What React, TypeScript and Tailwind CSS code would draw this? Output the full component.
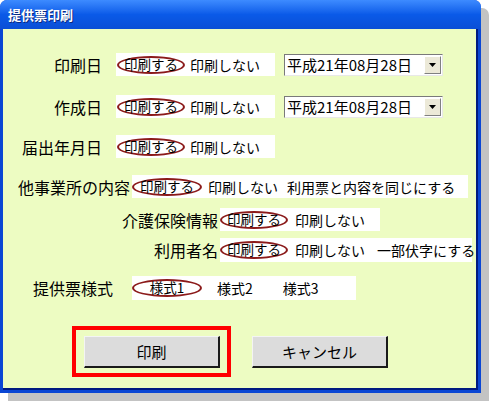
import React from 'react';

const Oval = ({ w, children }: { w: number; children: React.ReactNode }) => (
  <span
    className="shrink-0 flex items-center justify-center h-[18px] rounded-[50%] border-2 border-[#8b1a1a] text-[13.5px] leading-none whitespace-nowrap"
    style={{ width: w }}
  >
    {children}
  </span>
);

const Opt = ({ ml, children }: { ml: string; children: React.ReactNode }) => (
  <span className={`${ml} shrink-0 text-[14px] leading-none whitespace-nowrap`}>{children}</span>
);

const DateSelect = () => (
  <div className="ml-[9px] w-[159px] h-[22px] shrink-0 flex items-center bg-white border border-t-[#7a7a7a] border-l-[#7a7a7a] border-b-[#e8e8e8] border-r-[#e8e8e8]">
    <span className="flex-1 pl-[2px] text-[15px] leading-none whitespace-nowrap">平成21年08月28日</span>
    <span className="w-[17px] h-[18px] mr-[1px] flex items-center justify-center bg-[#ece9d8] border border-t-white border-l-white border-b-[#808080] border-r-[#808080]">
      <svg width="7" height="4" viewBox="0 0 7 4">
        <path d="M0 0h7L3.5 4z" fill="#000" />
      </svg>
    </span>
  </div>
);

const Btn = ({ children }: { children: React.ReactNode }) => (
  <div className="w-[136px] h-[32px] flex items-center justify-center bg-[#dcdcdc] border-t border-l border-t-[#f4f4f4] border-l-[#f4f4f4] border-b-2 border-r-2 border-b-[#1a1a1a] border-r-[#1a1a1a] text-[15px] leading-none">
    {children}
  </div>
);

export default function App() {
  return (
    <div className="w-[491px] h-[403px] bg-white font-['Noto_Sans_CJK_JP',sans-serif] text-black">
      <div className="w-[481px] h-[393px] flex flex-col rounded-t-[7px] bg-[#0a46d4] shadow-[8px_8px_0_#c3c3c3]">
        {/* title bar */}
        <div className="h-[29px] flex items-center pl-[8px] rounded-t-[7px] bg-gradient-to-b from-[#3d8bff] via-[#0a5ae8] to-[#0a4fd6]">
          <span className="text-white font-bold text-[13px] leading-none [text-shadow:1px_1px_0_#0a2a80]">提供票印刷</span>
        </div>

        {/* body */}
        <div className="flex-1 mx-[3px] mb-[3px] flex flex-col bg-[#edfcc2] border-r-2 border-b-2 border-[#001a80]">
          {/* 印刷日 */}
          <div className="mt-[24px] flex items-center h-[23px]">
            <span className="w-[99px] text-right text-[16px] leading-none">印刷日</span>
            <div className="ml-[14px] w-[159px] h-[23px] bg-white flex items-center pl-[1px]">
              <Oval w={68}>印刷する</Oval>
              <Opt ml="ml-[5px]">印刷しない</Opt>
            </div>
            <DateSelect />
          </div>

          {/* 作成日 */}
          <div className="mt-[19px] flex items-center h-[23px]">
            <span className="w-[99px] text-right text-[16px] leading-none">作成日</span>
            <div className="ml-[14px] w-[159px] h-[23px] bg-white flex items-center pl-[1px]">
              <Oval w={68}>印刷する</Oval>
              <Opt ml="ml-[5px]">印刷しない</Opt>
            </div>
            <DateSelect />
          </div>

          {/* 届出年月日 */}
          <div className="mt-[17px] flex items-center h-[23px]">
            <span className="w-[99px] text-right text-[16px] leading-none">届出年月日</span>
            <div className="ml-[14px] w-[159px] h-[23px] bg-white flex items-center pl-[1px]">
              <Oval w={68}>印刷する</Oval>
              <Opt ml="ml-[5px]">印刷しない</Opt>
            </div>
          </div>

          {/* 他事業所の内容 */}
          <div className="mt-[17px] flex items-center h-[23px]">
            <span className="ml-[15px] w-[114px] text-[16px] leading-none whitespace-nowrap">他事業所の内容</span>
            <div className="w-[336px] h-[23px] bg-white flex items-center">
              <Oval w={70}>印刷する</Oval>
              <Opt ml="ml-[6px]">印刷しない</Opt>
              <Opt ml="ml-[9px]">利用票と内容を同じにする</Opt>
            </div>
          </div>

          {/* 介護保険情報 */}
          <div className="mt-[10px] flex items-center h-[23px]">
            <span className="w-[215px] text-right text-[16px] leading-none">介護保険情報</span>
            <div className="ml-[2px] w-[160px] h-[23px] bg-white flex items-center">
              <Oval w={68}>印刷する</Oval>
              <Opt ml="ml-[7px]">印刷しない</Opt>
            </div>
          </div>

          {/* 利用者名 */}
          <div className="mt-[7px] flex items-center h-[24px]">
            <span className="w-[215px] text-right text-[16px] leading-none">利用者名</span>
            <div className="ml-[2px] w-[252px] h-[24px] bg-white flex items-center">
              <Oval w={68}>印刷する</Oval>
              <Opt ml="ml-[7px]">印刷しない</Opt>
              <Opt ml="ml-[12px]">一部伏字にする</Opt>
            </div>
          </div>

          {/* 提供票様式 */}
          <div className="mt-[14px] flex items-center h-[24px]">
            <span className="ml-[30px] w-[99px] text-[16px] leading-none">提供票様式</span>
            <div className="w-[224px] h-[24px] bg-white flex items-center">
              <Oval w={70}>様式1</Oval>
              <Opt ml="ml-[15px]">様式2</Opt>
              <Opt ml="ml-[30px]">様式3</Opt>
            </div>
          </div>

          {/* buttons */}
          <div className="mt-[26px] flex items-center">
            <div className="ml-[69px] w-[159px] h-[51px] border-4 border-[#ff0000] flex items-center pl-[8px]">
              <Btn>印刷</Btn>
            </div>
            <div className="ml-[21px]">
              <Btn>キャンセル</Btn>
            </div>
          </div>
        </div>
      </div>
    </div>
  );
}
